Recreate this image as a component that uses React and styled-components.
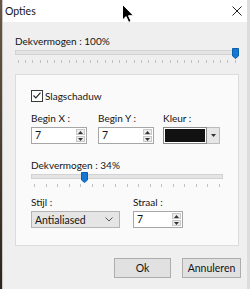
import React from 'react';
import styled, { createGlobalStyle } from 'styled-components';

const GlobalStyle = createGlobalStyle`
  html, body {
    margin: 0;
    padding: 0;
  }
  body {
    width: 250px;
    height: 289px;
    overflow: hidden;
    font-family: Lato, "Liberation Sans", sans-serif;
    font-size: 10px;
    color: #141414;
  }
`;

const Screen = styled.div`
  display: flex;
  width: 250px;
  height: 289px;
  padding-left: 2px;
  box-sizing: border-box;
  background: linear-gradient(#6a5844, #2e241b);
`;

const Dialog = styled.div`
  position: relative;
  flex: 1;
  display: flex;
  flex-direction: column;
  background: #efefef;
  border-left: 1px solid #c8c8c8;
  border-right: 4px solid #dcdcdc;
`;

const TitleBar = styled.div`
  display: flex;
  align-items: center;
  justify-content: space-between;
  height: 22px;
  padding: 0 5px 0 2px;
  background: #ffffff;
  font-size: 10.5px;
`;

const Content = styled.div`
  display: flex;
  flex-direction: column;
  padding: 13px 8px 0 12px;
`;

const Label = styled.div`
  line-height: 13px;
  white-space: nowrap;
`;

const SliderBox = styled.div`
  position: relative;
  height: 17px;
  margin-top: ${p => p.$gap || 0}px;
`;

const Track = styled.div`
  position: absolute;
  left: 0;
  right: 0;
  top: 2px;
  height: 3px;
  background: #e4e4e4;
  border: 1px solid #d2d2d2;
`;

const Thumb = styled.svg`
  position: absolute;
  top: 0;
`;

const Ticks = styled.div`
  position: absolute;
  left: 3px;
  right: 3px;
  top: 12px;
  display: flex;
  justify-content: space-between;
`;

const Tick = styled.span`
  width: 1px;
  height: 3px;
  background: #c2c2c2;
`;

const Group = styled.div`
  display: flex;
  flex-direction: column;
  height: 172px;
  box-sizing: border-box;
  margin-top: 9px;
  padding: 14px 15px 0 15px;
  background: #fafafa;
  border: 1px solid #dcdcdc;
`;

const CheckRow = styled.label`
  display: flex;
  align-items: center;
  gap: 2px;
  height: 13px;
`;

const Box = styled.span`
  display: flex;
  align-items: center;
  justify-content: center;
  width: 10px;
  height: 10px;
  border: 1px solid #3a3a3a;
  background: #fff;
`;

const FieldRow = styled.div`
  display: flex;
  margin-top: ${p => p.$gap}px;
`;

const Field = styled.div`
  display: flex;
  flex-direction: column;
  gap: 2px;
  width: ${p => p.$w}px;
`;

const Spin = styled.div`
  display: flex;
  width: ${p => p.$w}px;
  height: 17px;
  box-sizing: border-box;
  background: #fff;
  border: 1px solid #a6a6a6;
`;

const SpinValue = styled.span`
  flex: 1;
  padding-left: 3px;
  font-size: 10.5px;
  line-height: 15px;
`;

const SpinButtons = styled.div`
  display: flex;
  flex-direction: column;
  justify-content: center;
  gap: 1px;
  width: 9px;
  margin: 1px 1px 1px 0;
`;

const SpinButton = styled.div`
  display: flex;
  align-items: center;
  justify-content: center;
  flex: 1;
  background: #ececec;
  border: 1px solid #c8c8c8;
`;

const ColorPick = styled.div`
  display: flex;
  height: 17px;
`;

const Swatch = styled.div`
  width: 44px;
  box-sizing: border-box;
  background: #111;
  border: 1px solid #8a8a8a;
  box-shadow: inset 0 0 0 1px #fff;
`;

const DropButton = styled.div`
  display: flex;
  align-items: center;
  justify-content: center;
  width: 12px;
  background: #e6e6e6;
  border: 1px solid #bcbcbc;
  border-left: none;
`;

const Select = styled.div`
  display: flex;
  align-items: center;
  justify-content: space-between;
  width: 89px;
  height: 17px;
  box-sizing: border-box;
  padding: 0 6px 0 3px;
  background: #e5e5e5;
  border: 1px solid #b4b4b4;
  font-size: 10.5px;
`;

const ButtonRow = styled.div`
  display: flex;
  justify-content: flex-end;
  gap: 11px;
  margin: 12px -2px 0 0;
`;

const Button = styled.div`
  display: flex;
  align-items: center;
  justify-content: center;
  width: ${p => p.$w}px;
  height: 20px;
  box-sizing: border-box;
  background: #e1e1e1;
  border: 1px solid #adadad;
  font-size: 10.5px;
`;

const Cursor = styled.svg`
  position: absolute;
  left: 119px;
  top: 4px;
`;

function Slider({ value, ticks, gap }) {
  return (
    <SliderBox $gap={gap}>
      <Track />
      <Ticks>
        {Array.from({ length: ticks }, (_, i) => <Tick key={i} />)}
      </Ticks>
      <Thumb width="7" height="11" viewBox="0 0 7 11"
        style={{ left: `calc(${value}% - ${value * 0.07}px)` }}>
        <path d="M0.5 0.5h6v7.5l-3 2.5l-3-2.5z" fill="#1677d2" stroke="#0c5eab" />
      </Thumb>
    </SliderBox>
  );
}

function SpinBox({ w, value }) {
  return (
    <Spin $w={w}>
      <SpinValue>{value}</SpinValue>
      <SpinButtons>
        <SpinButton>
          <svg width="5" height="3" viewBox="0 0 5 3"><path d="M0 3l2.5-3l2.5 3z" fill="#333" /></svg>
        </SpinButton>
        <SpinButton>
          <svg width="5" height="3" viewBox="0 0 5 3"><path d="M0 0l2.5 3l2.5-3z" fill="#333" /></svg>
        </SpinButton>
      </SpinButtons>
    </Spin>
  );
}

export default function App() {
  return (
    <Screen>
      <GlobalStyle />
      <Dialog>
        <TitleBar>
          <span>Opties</span>
          <svg width="10" height="10" viewBox="0 0 10 10">
            <path d="M0.5 0.5l9 9M9.5 0.5l-9 9" stroke="#222" strokeWidth="1" />
          </svg>
        </TitleBar>
        <Content>
          <Label>Dekvermogen : 100%</Label>
          <Slider value={100} ticks={31} gap={0} />
          <Group>
            <CheckRow>
              <Box>
                <svg width="8" height="7" viewBox="0 0 8 7">
                  <path d="M0.5 3.5l2.3 2.4l4.7-5.2" fill="none" stroke="#222" strokeWidth="1.1" />
                </svg>
              </Box>
              Slagschaduw
            </CheckRow>
            <FieldRow $gap={10}>
              <Field $w={67}>
                <Label>Begin X :</Label>
                <SpinBox w={56} value="7" />
              </Field>
              <Field $w={65}>
                <Label>Begin Y :</Label>
                <SpinBox w={56} value="7" />
              </Field>
              <Field $w={60}>
                <Label>Kleur :</Label>
                <ColorPick>
                  <Swatch />
                  <DropButton>
                    <svg width="5" height="3" viewBox="0 0 5 3"><path d="M0 0l2.5 3l2.5-3z" fill="#333" /></svg>
                  </DropButton>
                </ColorPick>
              </Field>
            </FieldRow>
            <FieldRow $gap={15}>
              <Label>Dekvermogen : 34%</Label>
            </FieldRow>
            <Slider value={27} ticks={17} gap={0} />
            <FieldRow $gap={7}>
              <Field $w={102}>
                <Label>Stijl :</Label>
                <Select>
                  Antialiased
                  <svg width="8" height="5" viewBox="0 0 8 5">
                    <path d="M0.5 0.5l3.5 3.5l3.5-3.5" fill="none" stroke="#555" />
                  </svg>
                </Select>
              </Field>
              <Field $w={60}>
                <Label>Straal :</Label>
                <SpinBox w={50} value="7" />
              </Field>
            </FieldRow>
          </Group>
          <ButtonRow>
            <Button $w={57}>Ok</Button>
            <Button $w={59}>Annuleren</Button>
          </ButtonRow>
        </Content>
        <Cursor width="12" height="19" viewBox="0 0 12 19">
          <path d="M0.5 0.5v15.5l3.6-3.4l2.6 5.8l2.4-1.1l-2.6-5.6h5z" fill="#000" stroke="#fff" strokeWidth="1" />
        </Cursor>
      </Dialog>
    </Screen>
  );
}
